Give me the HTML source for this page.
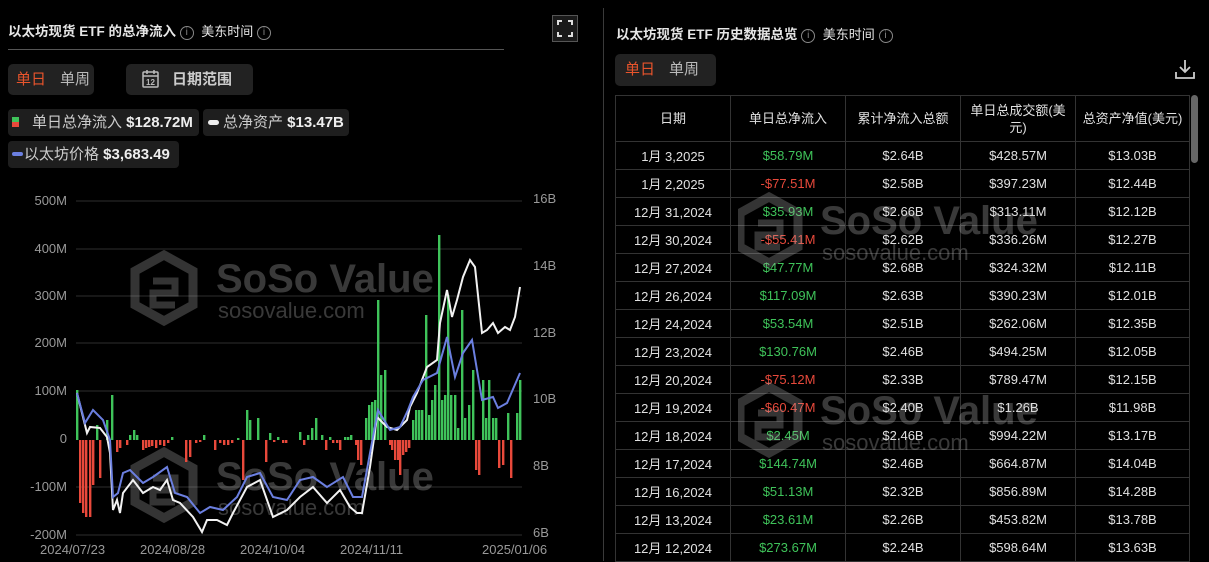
<!DOCTYPE html>
<html><head><meta charset="utf-8">
<style>
*{margin:0;padding:0;box-sizing:border-box}
body{width:1209px;height:561px;background:#000;overflow:hidden;font-family:"Liberation Sans","Noto Sans CJK SC",sans-serif;color:#ddd;position:relative}
.abs{position:absolute}
.title{font-size:13.5px;font-weight:bold;color:#e6e6e6;white-space:nowrap}
.info{display:inline-block;width:14px;height:14px;border:1px solid #888;border-radius:50%;font-size:10px;line-height:12px;text-align:center;color:#888;font-weight:normal;vertical-align:1px}
.tz{font-size:13px;color:#e6e6e6;font-weight:normal}
.seg{background:#222;border-radius:5px;font-size:15px}
.chip{background:#1e1e1e;border-radius:4px;height:27px;font-size:15px;color:#ccc;white-space:nowrap;line-height:27px}
.chip b{color:#eee}
table{border-collapse:collapse;font-size:13px;color:#e0e0e0}
td{border:1px solid #333;text-align:center;height:28px;padding:0}
th{border:1px solid #333;font-weight:normal;height:46px;font-size:13px;line-height:17px;color:#e0e0e0}
.g{color:#3fc35a}.r{color:#e8493b}
</style></head><body>
<!-- left panel -->
<div class="abs title" style="left:8px;top:20px">以太坊现货 ETF 的总净流入 <span class="info">i</span> &nbsp;<span class="tz">美东时间</span> <span class="info">i</span></div>
<div class="abs" style="left:552px;top:15px;width:26px;height:27px;border:1px solid #555;background:#1a1a1a">
<svg width="24" height="25" viewBox="0 0 24 25"><path d="M5 9V5h4M15 5h4v4M19 16v4h-4M9 20H5v-4" stroke="#ddd" stroke-width="2" fill="none"/></svg></div>
<div class="abs" style="left:8px;top:49px;width:496px;height:1px;background:#555"></div>
<div class="abs seg" style="left:8px;top:64px;width:86px;height:31px;line-height:31px"><span style="color:#e8542c;margin-left:8px">单日</span><span style="color:#bbb;margin-left:14px">单周</span></div>
<div class="abs seg" style="left:126px;top:64px;width:127px;height:31px;line-height:31px;color:#ccc;font-weight:bold">
<svg class="abs" style="left:15px;top:5px" width="20" height="20" viewBox="0 0 20 20"><rect x="2" y="3" width="15" height="15" rx="1" stroke="#bbb" stroke-width="1.5" fill="none"/><path d="M2 7h15M6 1v4M13 1v4" stroke="#bbb" stroke-width="1.5"/><text x="9.5" y="16" font-size="8" fill="#bbb" text-anchor="middle" font-family="Liberation Sans">12</text></svg>
<span style="margin-left:46px">日期范围</span></div>
<div class="abs chip" style="left:8px;top:109px;width:191px"><span style="position:absolute;left:4px;top:8px;width:7px;height:5px;background:#3fc35a"></span><span style="position:absolute;left:4px;top:13px;width:7px;height:5px;background:#e8493b"></span><span style="margin-left:24px">单日总净流入 <b>$128.72M</b></span></div>
<div class="abs chip" style="left:203px;top:109px;width:146px"><span style="position:absolute;left:5px;top:11px;width:11px;height:5px;border-radius:3px;background:#eee"></span><span style="margin-left:20px">总净资产 <b>$13.47B</b></span></div>
<div class="abs chip" style="left:8px;top:141px;width:171px"><span style="position:absolute;left:4px;top:11px;width:11px;height:4px;border-radius:2px;background:#6b7fe0"></span><span style="margin-left:16px">以太坊价格 <b>$3,683.49</b></span></div>

<svg class="abs" style="left:0;top:180px" width="600" height="381" viewBox="0 180 600 381" id="ch">
<g stroke="#2e2e2e" stroke-width="1">
<line x1="76" x2="522" y1="201" y2="201"/><line x1="76" x2="522" y1="249" y2="249"/><line x1="76" x2="522" y1="296" y2="296"/><line x1="76" x2="522" y1="343" y2="343"/><line x1="76" x2="522" y1="391" y2="391"/><line x1="76" x2="522" y1="487" y2="487"/><line x1="76" x2="522" y1="535" y2="535"/>
</g>
<g font-family="Liberation Sans" font-size="13" fill="#999" text-anchor="end">
<text x="67" y="205">500M</text><text x="67" y="253">400M</text><text x="67" y="300">300M</text><text x="67" y="347">200M</text><text x="67" y="395">100M</text><text x="67" y="443">0</text><text x="67" y="491">-100M</text><text x="67" y="539">-200M</text>
</g>
<g font-family="Liberation Sans" font-size="13" fill="#999">
<text x="533" y="203">16B</text><text x="533" y="270">14B</text><text x="533" y="337">12B</text><text x="533" y="403">10B</text><text x="533" y="470">8B</text><text x="533" y="537">6B</text>
<text x="40" y="554">2024/07/23</text><text x="140" y="554">2024/08/28</text><text x="240" y="554">2024/10/04</text><text x="340" y="554">2024/11/11</text><text x="482" y="554">2025/01/06</text>
</g>
<g opacity="0.28">
<g transform="translate(133,253)"><path d="M31 2L60 18V52L31 68L2 52V18Z" stroke="#bbb" stroke-width="9" fill="none"/><path d="M20 28h22v12H20v12h22" stroke="#bbb" stroke-width="7" fill="none"/></g>
<text x="216" y="292" font-family="Liberation Sans" font-weight="bold" font-size="40" fill="#ccc">SoSo Value</text>
<text x="218" y="318" font-family="Liberation Sans" font-size="22" fill="#ccc">sosovalue.com</text>
<g transform="translate(133,450)"><path d="M31 2L60 18V52L31 68L2 52V18Z" stroke="#bbb" stroke-width="9" fill="none"/><path d="M20 28h22v12H20v12h22" stroke="#bbb" stroke-width="7" fill="none"/></g>
<text x="216" y="490" font-family="Liberation Sans" font-weight="bold" font-size="40" fill="#ccc">SoSo Value</text>
<text x="218" y="515" font-family="Liberation Sans" font-size="22" fill="#ccc">sosovalue.com</text>
</g>
<g id="bars"></g>
<polyline fill="none" stroke="#f2f2f2" stroke-width="2" points="77,393 87,433 90,427 100,428 107,437 110,453 113,510 117,500 120,513 123,493 133,480 143,493 153,487 160,490 167,480 173,500 180,503 193,517 202,532 207,520 217,520 227,525 233,513 247,487 260,480 273,517 287,510 300,497 313,487 327,503 340,490 350,507 357,513 362,513 370,467 377,417 387,427 397,430 407,420 410,407 417,393 427,367 437,360 440,323 447,290 452,317 457,300 463,277 470,260 475,267 482,333 487,330 493,323 498,333 505,327 510,330 515,317 520,287"/>
<polyline fill="none" stroke="#6b7fe0" stroke-width="2" points="77,393 85,423 93,410 103,420 110,440 113,497 118,493 123,473 130,470 143,483 153,477 167,467 175,493 187,497 200,513 210,507 223,510 237,497 247,477 260,473 273,497 287,500 300,480 313,477 327,487 343,477 353,497 362,497 370,453 378,410 390,430 400,427 408,410 413,397 423,380 437,373 447,337 455,377 463,353 472,340 482,400 493,397 498,408 507,403 520,373"/>
</svg>
<script>
var d=[[77,50],[80,-63],[83,-73],[86,-77],[90,-77],[93,-45],[97,15],[100,-38],[107,20],[112,45],[117,-12],[120,-8],[127,-5],[130,5],[134,10],[137,5],[143,-10],[146,-8],[149,-7],[152,-6],[156,-8],[160,-5],[164,-6],[168,-3],[172,3],[186,-22],[190,-17],[196,-3],[200,-2],[204,5],[215,-10],[220,-3],[224,-5],[228,-5],[232,-3],[238,2],[243,-40],[247,30],[250,20],[258,22],[266,-22],[270,7],[274,-2],[278,3],[283,-3],[286,-3],[300,8],[304,-5],[308,5],[312,12],[316,22],[322,5],[326,-10],[330,3],[333,-3],[337,-3],[340,-10],[345,3],[348,3],[351,5],[356,-5],[358,-20],[361,-25],[366,22],[369,35],[372,38],[375,40],[378,140],[381,65],[385,70],[390,-5],[392,-10],[395,-20],[398,-20],[400,-35],[403,-15],[406,-12],[409,-8],[413,20],[416,30],[419,30],[422,30],[426,125],[429,25],[432,40],[435,55],[439,205],[442,40],[445,45],[448,145],[451,45],[455,45],[458,12],[462,130],[465,22],[469,35],[473,70],[476,-30],[479,-35],[483,60],[486,22],[489,60],[493,22],[496,22],[499,-28],[503,-25],[508,27],[511,-38],[517,27],[520,60]];
var s='';d.forEach(function(b){var h=Math.abs(b[1]);var y=b[1]>0?440-h:440;s+='<rect x="'+(b[0]-1)+'" y="'+y+'" width="2.4" height="'+h+'" fill="'+(b[1]>0?'#3fc35a':'#e8493b')+'"/>';});
document.getElementById('bars').innerHTML=s;
</script>

<div class="abs" style="left:603px;top:8px;width:1px;height:553px;background:#3a3a3a"></div>

<!-- right panel -->
<div class="abs title" style="left:616px;top:23px">以太坊现货 ETF 历史数据总览 <span class="info">i</span> &nbsp;<span class="tz">美东时间</span> <span class="info">i</span></div>
<div class="abs seg" style="left:615px;top:54px;width:101px;height:32px;line-height:32px"><span style="color:#e8542c;margin-left:10px">单日</span><span style="color:#bbb;margin-left:14px">单周</span></div>
<svg class="abs" style="left:1174px;top:58px" width="22" height="22" viewBox="0 0 22 22"><path d="M11 2v12M6 9l5 5 5-5M2 14v6h18v-6" stroke="#ccc" stroke-width="1.8" fill="none"/></svg>
<div class="abs" style="left:1191px;top:95px;width:7px;height:68px;border-radius:4px;background:#666"></div>
<table class="abs" style="left:615px;top:95px;width:575px">
<tr><th style="width:115px">日期</th><th style="width:115px">单日总净流入</th><th style="width:115px">累计净流入总额</th><th style="width:115px">单日总成交额(美<br>元)</th><th>总资产净值(美元)</th></tr>
<tr><td>1月 3,2025</td><td class="g">$58.79M</td><td>$2.64B</td><td>$428.57M</td><td>$13.03B</td></tr>
<tr><td>1月 2,2025</td><td class="r">-$77.51M</td><td>$2.58B</td><td>$397.23M</td><td>$12.44B</td></tr>
<tr><td>12月 31,2024</td><td class="g">$35.93M</td><td>$2.66B</td><td>$313.11M</td><td>$12.12B</td></tr>
<tr><td>12月 30,2024</td><td class="r">-$55.41M</td><td>$2.62B</td><td>$336.26M</td><td>$12.27B</td></tr>
<tr><td>12月 27,2024</td><td class="g">$47.77M</td><td>$2.68B</td><td>$324.32M</td><td>$12.11B</td></tr>
<tr><td>12月 26,2024</td><td class="g">$117.09M</td><td>$2.63B</td><td>$390.23M</td><td>$12.01B</td></tr>
<tr><td>12月 24,2024</td><td class="g">$53.54M</td><td>$2.51B</td><td>$262.06M</td><td>$12.35B</td></tr>
<tr><td>12月 23,2024</td><td class="g">$130.76M</td><td>$2.46B</td><td>$494.25M</td><td>$12.05B</td></tr>
<tr><td>12月 20,2024</td><td class="r">-$75.12M</td><td>$2.33B</td><td>$789.47M</td><td>$12.15B</td></tr>
<tr><td>12月 19,2024</td><td class="r">-$60.47M</td><td>$2.40B</td><td>$1.26B</td><td>$11.98B</td></tr>
<tr><td>12月 18,2024</td><td class="g">$2.45M</td><td>$2.46B</td><td>$994.22M</td><td>$13.17B</td></tr>
<tr><td>12月 17,2024</td><td class="g">$144.74M</td><td>$2.46B</td><td>$664.87M</td><td>$14.04B</td></tr>
<tr><td>12月 16,2024</td><td class="g">$51.13M</td><td>$2.32B</td><td>$856.89M</td><td>$14.28B</td></tr>
<tr><td>12月 13,2024</td><td class="g">$23.61M</td><td>$2.26B</td><td>$453.82M</td><td>$13.78B</td></tr>
<tr><td>12月 12,2024</td><td class="g">$273.67M</td><td>$2.24B</td><td>$598.64M</td><td>$13.63B</td></tr>
</table>
<svg class="abs" style="left:738px;top:190px" width="340" height="280" opacity="0.28">
<g transform="translate(0,5)"><path d="M31 2L60 18V52L31 68L2 52V18Z" stroke="#bbb" stroke-width="9" fill="none"/><path d="M20 28h22v12H20v12h22" stroke="#bbb" stroke-width="7" fill="none"/></g>
<text x="82" y="44" font-family="Liberation Sans" font-weight="bold" font-size="40" fill="#ccc">SoSo Value</text>
<text x="84" y="70" font-family="Liberation Sans" font-size="22" fill="#ccc">sosovalue.com</text>
<g transform="translate(0,195)"><path d="M31 2L60 18V52L31 68L2 52V18Z" stroke="#bbb" stroke-width="9" fill="none"/><path d="M20 28h22v12H20v12h22" stroke="#bbb" stroke-width="7" fill="none"/></g>
<text x="82" y="234" font-family="Liberation Sans" font-weight="bold" font-size="40" fill="#ccc">SoSo Value</text>
<text x="84" y="260" font-family="Liberation Sans" font-size="22" fill="#ccc">sosovalue.com</text>
</svg>
</body></html>
